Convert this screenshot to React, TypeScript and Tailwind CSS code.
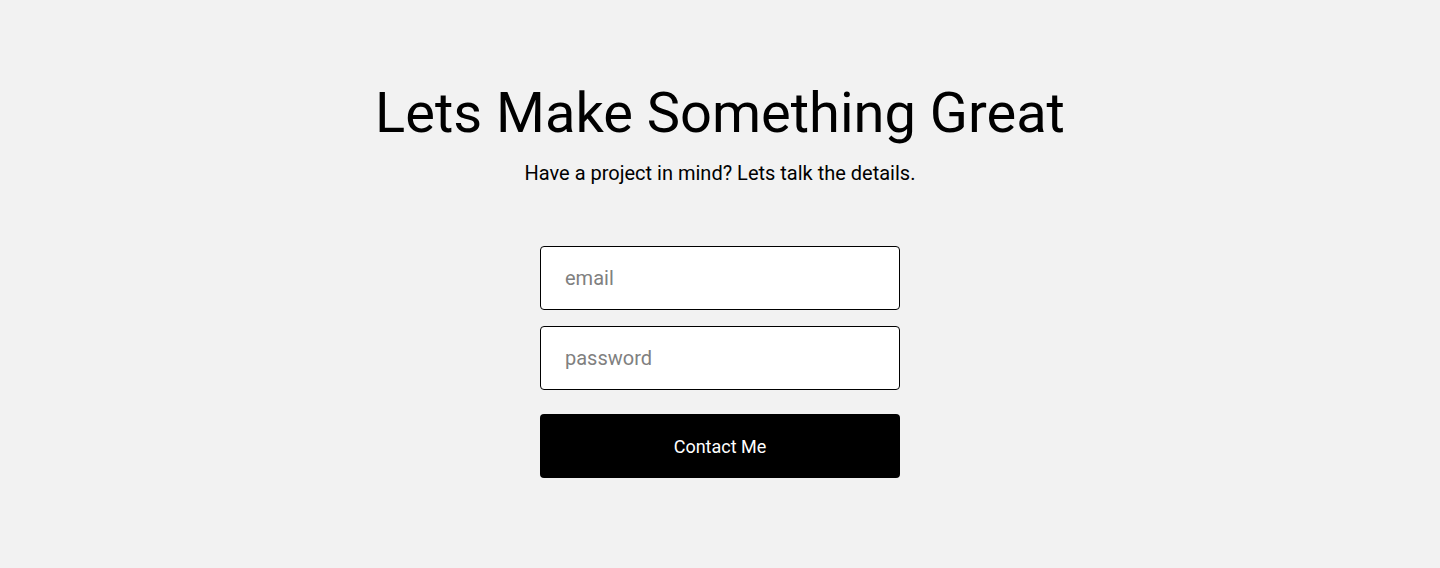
import React from "react";

export default function App() {
  return (
    <div className="min-h-[568px] w-full bg-[#f2f2f2] font-['Roboto',sans-serif] text-black">
      <div className="flex flex-col items-center pt-[78px]">
        <h1 className="text-[56px] leading-[70px] font-normal">Lets Make Something Great</h1>
        <p className="mt-[13px] text-[20px] leading-[24px]">Have a project in mind? Lets talk the details.</p>

        {/* form */}
        <form className="mt-[61px] flex w-[360px] flex-col">
          <input
            type="email"
            placeholder="email"
            className="h-[64px] w-full rounded-[4px] border border-black bg-white px-6 text-[20px] placeholder-[#808080] outline-none"
          />
          <input
            type="password"
            placeholder="password"
            className="mt-4 h-[64px] w-full rounded-[4px] border border-black bg-white px-6 text-[20px] placeholder-[#808080] outline-none"
          />
          <button
            type="submit"
            className="mt-6 h-[64px] w-full rounded-[4px] bg-black text-[18px] text-white"
          >
            Contact Me
          </button>
        </form>
      </div>
    </div>
  );
}
